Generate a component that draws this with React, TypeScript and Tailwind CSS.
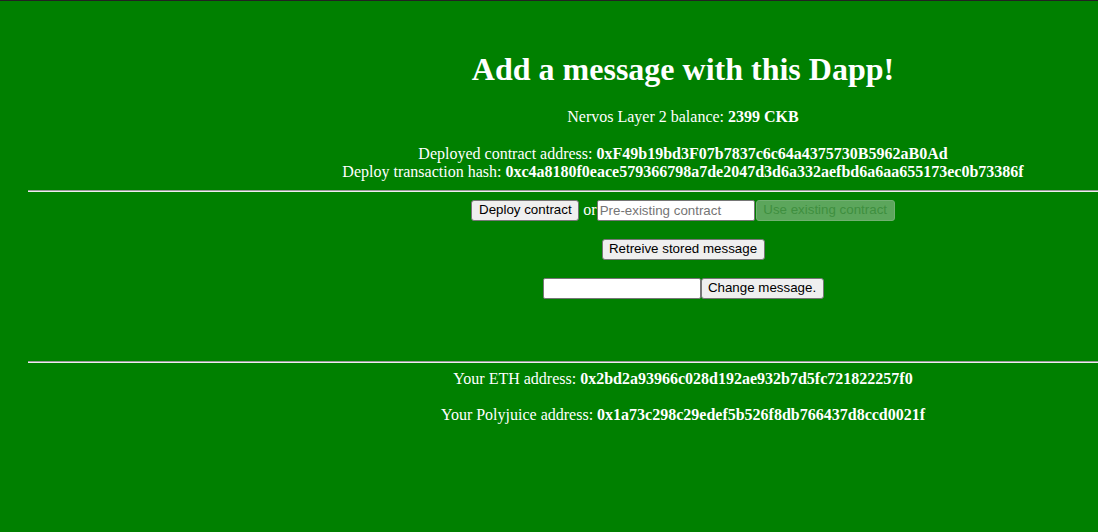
import React from "react";

const btn =
  "h-[21px] bg-[#efefef] border border-[#767676] rounded-[3px] px-[6px] text-[13.33px] text-black font-['Liberation_Sans',Arial,sans-serif] leading-none";
const input =
  "h-[21px] bg-white border border-[#767676] rounded-[2px] px-[2px] text-[13.33px] text-black font-['Liberation_Sans',Arial,sans-serif] placeholder:text-[#757575] outline-none";

function Rule() {
  return <hr className="my-[8px] border-t border-t-[#9a9a9a] border-b border-b-[#eeeeee]" />;
}

export default function App() {
  return (
    <div className="w-[1098px] h-[532px] overflow-hidden bg-[#008000] border-t border-[#222222] font-['Liberation_Serif','Times_New_Roman',serif] text-white text-[16px] leading-[18.4px]">
      <div className="ml-[28px] w-[1310px] pt-[29px] text-center">
        <h1 className="my-[21px] text-[32px] leading-[36px] font-bold">Add a message with this Dapp!</h1>
        <div>
          Nervos Layer 2 balance: <b>2399 CKB</b>
        </div>
        <div className="h-[18.4px]" />
        <div>
          Deployed contract address: <b>0xF49b19bd3F07b7837c6c64a4375730B5962aB0Ad</b>
        </div>
        <div>
          Deploy transaction hash: <b>0xc4a8180f0eace579366798a7de2047d3d6a332aefbd6a6aa655173ec0b73386f</b>
        </div>
        <Rule />
        <div className="flex justify-center items-center h-[21px]">
          <button className={`${btn} w-[108px]`}>Deploy contract</button>
          <span className="ml-[4px]">or</span>
          <input className={`${input} w-[158px]`} placeholder="Pre-existing contract" />
          <button
            disabled
            className="ml-[1px] w-[139px] h-[21px] bg-[#5ca65c] border border-[#72b072] rounded-[3px] px-[6px] text-[13.33px] text-[#3f8f3f] font-['Liberation_Sans',Arial,sans-serif] leading-none"
          >
            Use existing contract
          </button>
        </div>
        <div className="flex justify-center mt-[18px] h-[21px]">
          <button className={`${btn} w-[163px]`}>Retreive stored message</button>
        </div>
        <div className="flex justify-center items-center mt-[18px] h-[21px]">
          <input className={`${input} w-[158px]`} />
          <button className={`${btn} w-[123px]`}>Change message.</button>
        </div>
        <div className="h-[54px]" />
        <Rule />
        <div className="-mt-[1px]">
          Your ETH address: <b>0x2bd2a93966c028d192ae932b7d5fc721822257f0</b>
        </div>
        <div className="h-[18.4px]" />
        <div>
          Your Polyjuice address: <b>0x1a73c298c29edef5b526f8db766437d8ccd0021f</b>
        </div>
      </div>
    </div>
  );
}
